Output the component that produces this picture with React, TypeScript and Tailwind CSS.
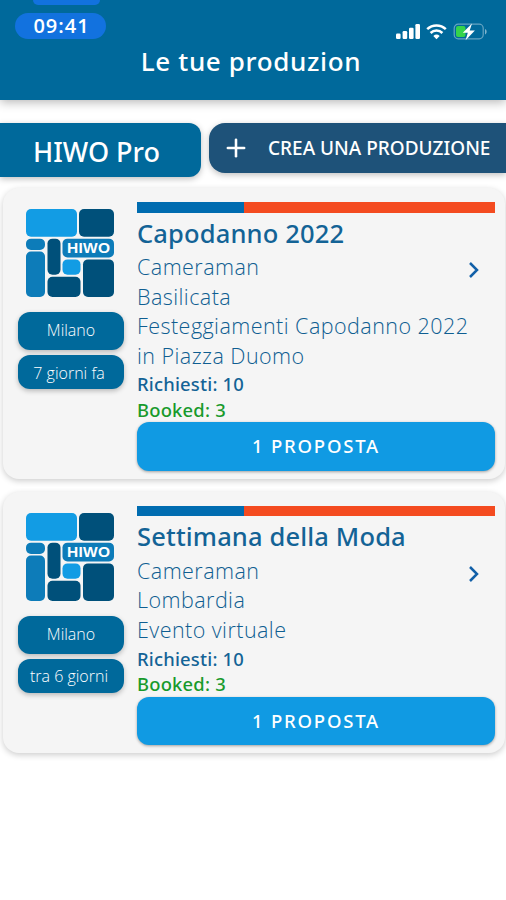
import { Plus } from "lucide-react";

interface Production {
  id: number;
  title: string;
  role: string;
  region: string;
  description: string;
  city: string;
  when: string;
  requested: number;
  booked: number;
}

const productions: Production[] = [
  {
    id: 1,
    title: "Capodanno 2022",
    role: "Cameraman",
    region: "Basilicata",
    description: "Festeggiamenti Capodanno 2022 in Piazza Duomo",
    city: "Milano",
    when: "7 giorni fa",
    requested: 10,
    booked: 3,
  },
  {
    id: 2,
    title: "Settimana della Moda",
    role: "Cameraman",
    region: "Lombardia",
    description: "Evento virtuale",
    city: "Milano",
    when: "tra 6 giorni",
    requested: 10,
    booked: 3,
  },
];

function StatusIcons() {
  return (
    <svg width="94" height="20" viewBox="0 0 94 20" className="shrink-0">
      <g fill="#fff">
        <rect x="1" y="11.5" width="4.6" height="5.5" rx="1.2" />
        <rect x="7.6" y="9" width="4.6" height="8" rx="1.2" />
        <rect x="14" y="5.8" width="4.6" height="11.2" rx="1.2" />
        <rect x="20.4" y="2" width="4.6" height="15" rx="1.2" />
        <path d="M41.5 17.2l-3.2-3.3a4.7 4.7 0 0 1 6.4 0z" />
      </g>
      <g fill="none" stroke="#fff" strokeWidth="2.5">
        <path d="M35.6 11a8.4 8.4 0 0 1 11.8 0" />
        <path d="M32.2 7.2a13.4 13.4 0 0 1 18.6 0" />
      </g>
      <rect x="59.2" y="2.2" width="29" height="14.6" rx="4" fill="none" stroke="#fff" strokeOpacity="0.4" strokeWidth="1.2" />
      <path d="M90 7v5.4c2.2-1 2.2-4.4 0-5.4z" fill="#fff" fillOpacity="0.5" />
      <rect x="61" y="4" width="9.5" height="11" rx="2" fill="#35d34b" />
      <path d="M77 1.6l-9.2 9.2h5l-2.2 7.4 9.3-9.6h-5.2z" fill="#fff" />
    </svg>
  );
}

function HiwoLogo() {
  return (
    <svg width="88" height="88" viewBox="0 0 88 89" preserveAspectRatio="none" className="mr-[2px] block">
      <rect x="0" y="0" width="51" height="28" rx="5" fill="#129ce4" />
      <rect x="53" y="0" width="35" height="28" rx="5" fill="#00507a" />
      <rect x="0" y="30" width="19" height="11.5" rx="5" fill="#0d7cb9" />
      <rect x="0" y="43" width="19" height="46" rx="5" fill="#0d7cb9" />
      <rect x="21.5" y="30" width="13" height="36.5" rx="5" fill="#00507a" />
      <rect x="36.5" y="30" width="51.5" height="19" rx="5" fill="#0d7cb9" />
      <rect x="36.5" y="51" width="18" height="15.5" rx="5" fill="#129ce4" />
      <rect x="21.5" y="68.5" width="33" height="20.5" rx="5" fill="#00507a" />
      <rect x="57" y="51" width="31" height="38" rx="5" fill="#00507a" />
      <text x="41" y="45" textLength="43" fontFamily="Liberation Sans, sans-serif" fontSize="15.5" fontWeight="700" fill="#fff">
        HIWO
      </text>
    </svg>
  );
}

function ProductionCard({ production }: { production: Production }) {
  return (
    <article className="flex gap-[13px] rounded-2xl bg-[#f5f5f5] pt-3.5 pr-2.5 pb-2 pl-[15px] shadow-[0_2px_6px_rgba(0,0,0,0.2)]">
      <div className="flex w-[106px] shrink-0 flex-col items-center pt-[7px]">
        <HiwoLogo />
        <span className="mt-[15px] flex h-[38px] w-full items-center justify-center rounded-xl bg-[#00699b] pb-0.5 text-[16px] font-light text-white shadow-[0_2px_5px_rgba(0,0,0,0.25)]">
          {production.city}
        </span>
        <span className="mt-[5px] flex h-[34px] w-full items-center justify-center rounded-xl bg-[#00699b] pt-px pr-1 text-[16px] font-light text-white shadow-[0_2px_5px_rgba(0,0,0,0.25)]">
          {production.when}
        </span>
      </div>
      <div className="min-w-0 flex-1">
        <div className="flex h-[10.5px] bg-[#f44b20]">
          <div
            className="bg-[#006cb0]"
            style={{ width: `${(production.booked / production.requested) * 100}%` }}
          />
        </div>
        <h2 className="font-['Noto_Sans',sans-serif] text-[25.5px] leading-[40.5px] font-medium tracking-[0.15px] text-[#136396]">
          {production.title}
        </h2>
        <div className="flex text-[21.5px] leading-[29.6px] font-light tracking-[0.45px] text-[#0f5e91]">
          <div className="-mt-px mb-px w-[337px]">
            <p>{production.role}</p>
            <p>{production.region}</p>
            <p>{production.description}</p>
          </div>
          <svg width="12" height="18" viewBox="0 0 12 18" className="-ml-[6px] mt-[8px] shrink-0">
            <path d="M2 2l7 7-7 7" fill="none" stroke="#1260a8" strokeWidth="2.5" />
          </svg>
        </div>
        <p className="font-['Noto_Sans',sans-serif] text-[18.4px] leading-[25.5px] font-medium tracking-[0.2px] text-[#136396]">
          Richiesti: {production.requested}
        </p>
        <p className="font-['Noto_Sans',sans-serif] text-[18.4px] leading-[25.5px] font-medium tracking-[0.2px] text-[#189a2c]">
          Booked: {production.booked}
        </p>
        <button className="flex h-[48.5px] w-full items-center justify-center rounded-xl bg-[#109ae3] pb-px font-['Noto_Sans',sans-serif] text-[18.5px] font-medium tracking-[1.8px] text-white shadow-[0_1px_3px_rgba(0,0,0,0.35)]">
          1 PROPOSTA
        </button>
      </div>
    </article>
  );
}

export default function App() {
  return (
    <main className="h-[900px] w-[506px] overflow-hidden bg-white font-['Open_Sans',sans-serif]">
      <header className="relative h-[100px] bg-[#00699b] shadow-[0_2px_10px_rgba(0,0,0,0.3)]">
        <div className="ml-[33px] h-[5px] w-[67px] rounded-b-lg bg-[#1272df]" />
        <div className="flex items-start justify-between pt-2 pr-[17px] pl-[15px]">
          <span className="flex h-[26px] w-[91px] items-center justify-center rounded-full bg-[#1272df] pl-0.5 text-[20px] font-semibold tracking-[1px] text-white">
            09:41
          </span>
          <div className="pt-[9px]">
            <StatusIcons />
          </div>
        </div>
        <h1 className="mt-px pr-1 text-center font-['Noto_Sans',sans-serif] text-[26px] leading-[36px] font-medium tracking-[0.65px] text-white">
          Le tue produzion
        </h1>
      </header>

      <div className="mt-[23px] flex items-start gap-2">
        <div className="flex h-[54px] w-[201px] items-center rounded-r-xl bg-[#00699b] pt-1 pl-[33px] font-['Noto_Sans',sans-serif] text-[27px] font-medium text-white shadow-[0_2px_6px_rgba(0,0,0,0.25)]">
          HIWO Pro
        </div>
        <button className="flex h-[50px] flex-1 items-center rounded-l-2xl bg-[#1e5279] pl-[13px] font-['Noto_Sans',sans-serif] font-medium whitespace-nowrap text-white shadow-[0_2px_6px_rgba(0,0,0,0.25)]">
          <Plus size={28} strokeWidth={2.2} className="shrink-0" />
          <span className="ml-[18px] text-[19px]">CREA UNA PRODUZIONE</span>
        </button>
      </div>

      <div className="mt-[11px] flex flex-col gap-[13px] pr-px pl-[3px]">
        {productions.map((production) => (
          <ProductionCard key={production.id} production={production} />
        ))}
      </div>
    </main>
  );
}
